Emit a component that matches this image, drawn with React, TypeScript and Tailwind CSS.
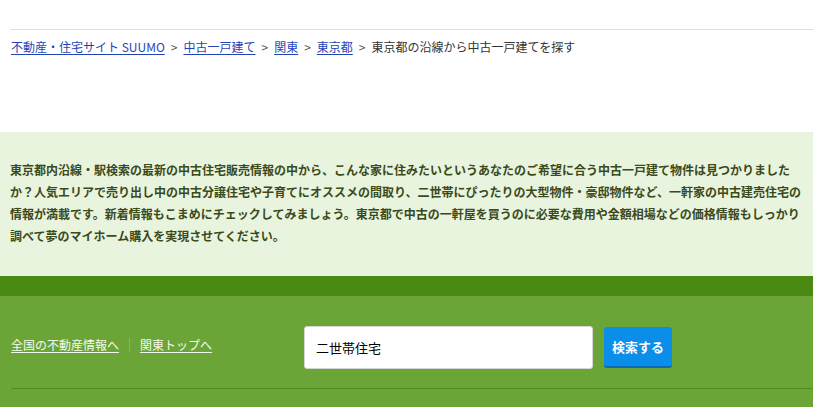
import React from 'react';

const font = { fontFamily: '"Noto Sans CJK JP", "Noto Sans", sans-serif' };

const crumbs = [
  { label: '不動産・住宅サイト SUUMO', href: '#' },
  { label: '中古一戸建て', href: '#' },
  { label: '関東', href: '#' },
  { label: '東京都', href: '#' },
];

const App: React.FC = () => {
  return (
    <div className="w-[813px] min-h-[408px] bg-white text-[#333]" style={font}>
      {/* Breadcrumb */}
      <div className="pt-[29px] pl-[11px]">
        <div className="border-t border-[#dcdcdc]" />
        <nav className="flex items-center h-[34px] text-[12px] leading-none">
          {crumbs.map((c) => (
            <React.Fragment key={c.label}>
              <a href={c.href} className="text-[#1f44b8] underline underline-offset-2">
                {c.label}
              </a>
              <span className="mx-[6px] text-[#555]">&gt;</span>
            </React.Fragment>
          ))}
          <span className="text-[#333]">東京都の沿線から中古一戸建てを探す</span>
        </nav>
      </div>

      <div className="h-[68px]" />

      {/* Description */}
      <section className="bg-[#e9f4de] pt-[27px] pb-[29px] px-[10px]">
        <p className="text-[12px] leading-[22px] font-bold text-[#3a4a1b] whitespace-nowrap">
          東京都内沿線・駅検索の最新の中古住宅販売情報の中から、こんな家に住みたいというあなたのご希望に合う中古一戸建て物件は見つかりました
          <br />
          か？人気エリアで売り出し中の中古分譲住宅や子育てにオススメの間取り、二世帯にぴったりの大型物件・豪邸物件など、一軒家の中古建売住宅の
          <br />
          情報が満載です。新着情報もこまめにチェックしてみましょう。東京都で中古の一軒屋を買うのに必要な費用や金額相場などの価格情報もしっかり
          <br />
          調べて夢のマイホーム購入を実現させてください。
        </p>
      </section>

      {/* Footer search */}
      <div className="h-[20px] bg-[#4a8912]" />
      <section className="bg-[#6ba437] pl-[11px] pt-[30px] pb-[18px]">
        <div className="flex items-center h-[43px]">
          <div className="w-[293px] mb-[6px] flex items-center text-[12px] text-[#f4faee]">
            <a href="#" className="underline underline-offset-2">全国の不動産情報へ</a>
            <span className="mx-[10px] h-[14px] border-l border-[#86b85a]" />
            <a href="#" className="underline underline-offset-2">関東トップへ</a>
          </div>
          <div className="w-[289px] h-[43px] bg-white rounded-[3px] border border-[#d6d6d6] flex items-center px-[11px] text-[13px] text-black">
            二世帯住宅
          </div>
          <button className="ml-[11px] w-[68px] h-[41px] bg-[#0b8eea] border-b-2 border-[#0a6cb8] rounded-[3px] text-white text-[13px] font-bold">
            検索する
          </button>
        </div>
        <div className="mt-[19px] border-t border-[#4f8e1c]" />
      </section>
    </div>
  );
};

export default App;
